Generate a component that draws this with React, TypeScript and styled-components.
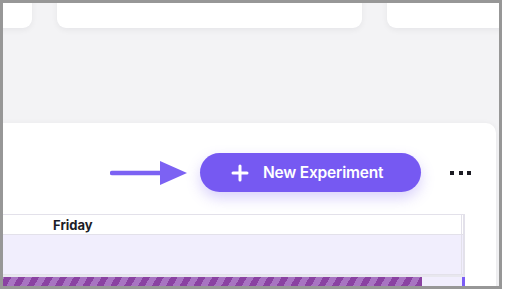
import React from "react";
import styled, { createGlobalStyle } from "styled-components";
import { Plus } from "lucide-react";

const GlobalStyle = createGlobalStyle`
  body {
    margin: 0;
    background: #ffffff;
    font-family: Inter, "Noto Sans", sans-serif;
  }
`;

const Frame = styled.div`
  box-sizing: border-box;
  width: 502px;
  height: 289px;
  border: 3px solid #979797;
  background: #f3f3f5;
  overflow: hidden;
`;

const SummaryRow = styled.div`
  display: flex;
  gap: 25px;
  margin-left: -276px;
`;

const SummaryCard = styled.div`
  flex: none;
  width: 305px;
  height: 45px;
  margin-top: -20px;
  background: #ffffff;
  border-radius: 9px;
  box-shadow: 0 2px 6px rgba(20, 20, 40, 0.06);
`;

const MainCard = styled.section`
  margin: 95px 3px 0 -40px;
  height: 220px;
  padding-top: 30px;
  background: #ffffff;
  border-radius: 10px;
  box-shadow: 0 1px 6px rgba(20, 20, 40, 0.06);
`;

const Toolbar = styled.div`
  display: flex;
  align-items: center;
  justify-content: flex-end;
  height: 39px;
  padding-right: 25px;
`;

const Hint = styled.svg`
  display: block;
  margin-right: 12px;
`;

const NewButton = styled.button`
  box-sizing: border-box;
  display: flex;
  align-items: center;
  gap: 11px;
  width: 221px;
  height: 39px;
  padding: 0 0 0 28px;
  border: none;
  border-radius: 20px;
  background: #7659f2;
  color: #ffffff;
  font-family: Inter, "Noto Sans", sans-serif;
  font-size: 15.5px;
  font-weight: 600;
  letter-spacing: -0.2px;
  box-shadow: 0 6px 14px rgba(118, 89, 242, 0.28);
  cursor: pointer;
`;

const More = styled.div`
  display: flex;
  gap: 4.5px;
  margin-left: 29px;
`;

const Dot = styled.span`
  width: 4px;
  height: 4px;
  background: #1b1b22;
`;

const Table = styled.div`
  margin: 22px 31px 0 0;
  border-top: 1px solid #e3e1ea;
  border-right: 1px solid #e3e1ea;
`;

const Row = styled.div<{ $height: number; $bg: string }>`
  display: grid;
  grid-template-columns: 1fr 2px;
  height: ${({ $height }) => $height}px;
  background: ${({ $bg }) => $bg};
`;

const Cell = styled.div`
  border-right: 1px solid #e3e1ea;
  border-bottom: 1px solid #e3e1ea;
`;

const DayLabel = styled(Cell)`
  display: flex;
  align-items: center;
  padding-left: 90px;
  font-size: 13px;
  font-weight: 700;
  color: #1d1d26;
`;

const Separator = styled.div`
  height: 2px;
  background: #e8e7ee;
`;

const TrackRow = styled.div`
  display: grid;
  grid-template-columns: 459px 40px 3px;
  height: 12px;
  background: #f1eefd;
`;

const StripedBar = styled.div`
  background: repeating-linear-gradient(
    120deg,
    #8a42a2 0 6px,
    #a874c2 6px 12px
  );
`;

const TodayMark = styled.div`
  grid-column: 3;
  background: #7b5cf5;
`;

export default function App() {
  return (
    <>
      <GlobalStyle />
      <Frame>
        <SummaryRow>
          <SummaryCard />
          <SummaryCard />
          <SummaryCard />
        </SummaryRow>
        <MainCard>
          <Toolbar>
            <Hint width="78" height="26" viewBox="0 0 78 26">
              <line x1="2" y1="13" x2="52" y2="13" stroke="#7c62f3" strokeWidth="4.5" strokeLinecap="round" />
              <polygon points="50,1 77,13 50,25" fill="#7c62f3" />
            </Hint>
            <NewButton>
              <Plus size={24} strokeWidth={3} />
              New Experiment
            </NewButton>
            <More>
              <Dot />
              <Dot />
              <Dot />
            </More>
          </Toolbar>
          <Table>
            <Row $height={20} $bg="#ffffff">
              <DayLabel>Friday</DayLabel>
              <Cell />
            </Row>
            <Row $height={40} $bg="#f1eefd">
              <Cell />
              <Cell />
            </Row>
            <Separator />
            <TrackRow>
              <StripedBar />
              <TodayMark />
            </TrackRow>
          </Table>
        </MainCard>
      </Frame>
    </>
  );
}
